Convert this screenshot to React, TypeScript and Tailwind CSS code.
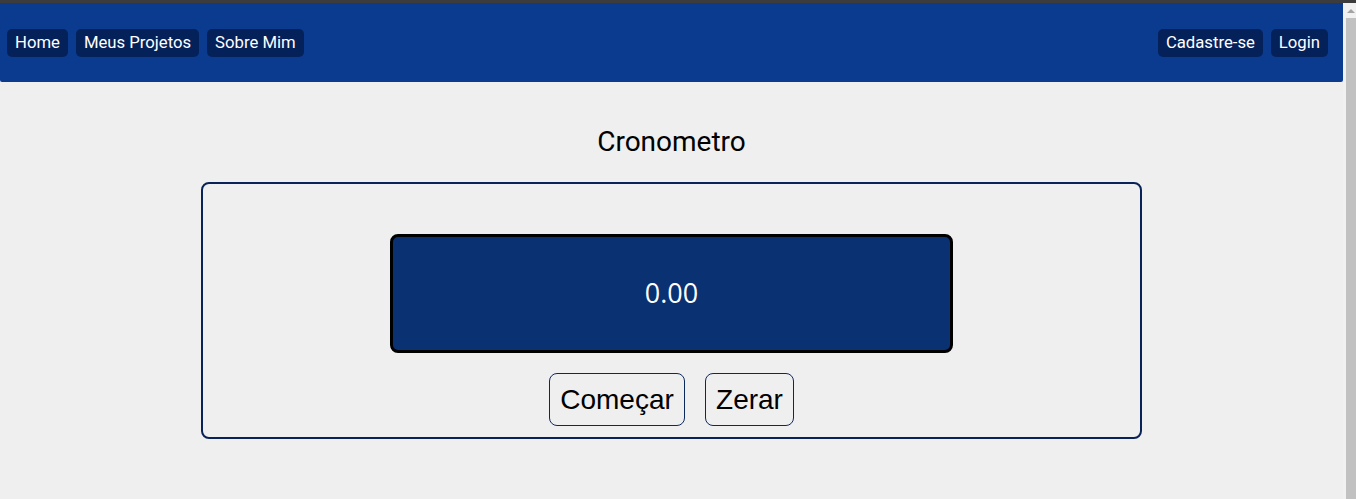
import React from "react";

function NavBtn({ children }: { children: React.ReactNode }) {
  return (
    <button className="h-[28px] px-[8px] rounded-[5px] bg-[#05215a] text-white text-[16.7px] leading-[28px] font-['Roboto',sans-serif]">
      {children}
    </button>
  );
}

export default function App() {
  return (
    <div className="w-[1356px] h-[499px] overflow-hidden flex flex-col bg-[#efefef]">
      <div className="h-[3px] bg-[#3c3c3c] shrink-0" />
      <div className="flex flex-1 min-h-0">
        <div className="flex-1 flex flex-col">
          <header className="h-[79px] shrink-0 bg-[#0b3b8f] rounded-b-[2px] flex items-center justify-between pl-[7px] pr-[15px]">
            <nav className="flex gap-[8px]">
              <NavBtn>Home</NavBtn>
              <NavBtn>Meus Projetos</NavBtn>
              <NavBtn>Sobre Mim</NavBtn>
            </nav>
            <nav className="flex gap-[8px]">
              <NavBtn>Cadastre-se</NavBtn>
              <NavBtn>Login</NavBtn>
            </nav>
          </header>
          <main className="flex flex-col items-center">
            <h2 className="mt-[43px] text-[28px] leading-[33px] text-black font-['Roboto',sans-serif]">
              Cronometro
            </h2>
            <section className="mt-[24px] w-[941px] h-[257px] border-2 border-[#0a2357] rounded-[8px] flex flex-col items-center">
              <div className="mt-[50px] w-[563px] h-[119px] border-[3px] border-black rounded-[8px] bg-[#0a3172] flex items-center justify-center">
                <span className="text-white text-[27px] font-['Open_Sans',sans-serif]">0.00</span>
              </div>
              <div className="mt-[20px] flex gap-[20px]">
                <button className="w-[136px] h-[53px] border border-[#0a2a5e] rounded-[8px] text-black text-[28px] font-['Liberation_Sans',Arial,sans-serif]">
                  Começar
                </button>
                <button className="w-[89px] h-[53px] border border-[#0a2a5e] rounded-[8px] text-black text-[28px] font-['Liberation_Sans',Arial,sans-serif]">
                  Zerar
                </button>
              </div>
            </section>
          </main>
        </div>
        <div className="w-[13px] shrink-0 bg-[#f1f1f1] flex flex-col">
          <div className="h-[15px] flex items-center justify-center pl-[3px]">
            <div className="w-0 h-0 border-l-[4px] border-r-[4px] border-b-[4px] border-l-transparent border-r-transparent border-b-[#a3a3a3]" />
          </div>
          <div className="flex-1 ml-[3px] bg-[#c1c1c1]" />
        </div>
      </div>
    </div>
  );
}
